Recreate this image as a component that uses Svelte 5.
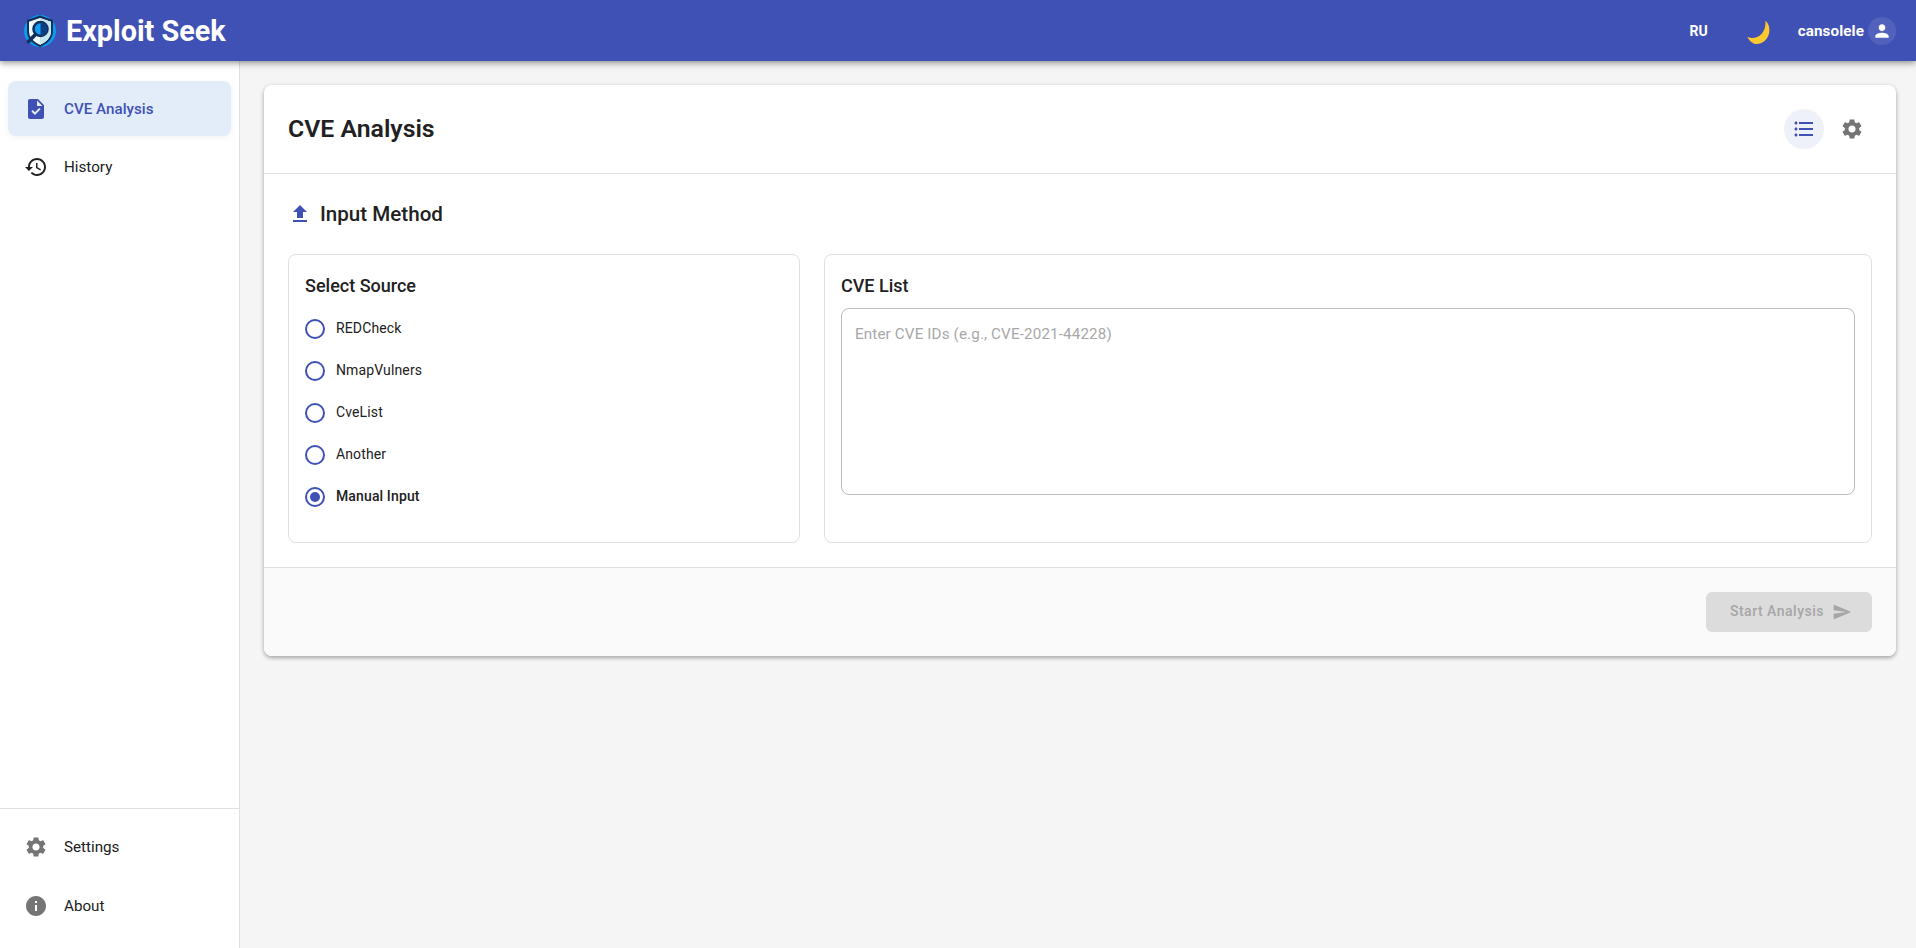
<script>
    const icons = {
        task: "M14 2H6c-1.1 0-1.99.9-1.99 2L4 20c0 1.1.89 2 1.99 2H18c1.1 0 2-.9 2-2V8l-6-6zm-3.06 16L7.4 14.46l1.41-1.41 2.12 2.12 4.24-4.24 1.41 1.41L10.94 18zM13 9V3.5L18.5 9H13z",
        history: "M13 3c-4.97 0-9 4.03-9 9H1l3.89 3.89.07.14L9 12H6c0-3.87 3.13-7 7-7s7 3.13 7 7-3.13 7-7 7c-1.93 0-3.68-.79-4.94-2.06l-1.42 1.42C8.27 19.99 10.51 21 13 21c4.97 0 9-4.03 9-9s-4.03-9-9-9zm-1 5v5l4.28 2.54.72-1.21-3.5-2.08V8H12z",
        settings: "M19.14 12.94c.04-.3.06-.61.06-.94 0-.32-.02-.64-.07-.94l2.03-1.58c.18-.14.23-.41.12-.61l-1.92-3.32c-.12-.22-.37-.29-.59-.22l-2.39.96c-.5-.38-1.03-.7-1.62-.94l-.36-2.54c-.04-.24-.24-.41-.48-.41h-3.84c-.24 0-.43.17-.47.41l-.36 2.54c-.59.24-1.13.57-1.62.94l-2.39-.96c-.22-.08-.47 0-.59.22L2.74 8.87c-.12.21-.08.47.12.61l2.03 1.58c-.05.3-.09.63-.09.94s.02.64.07.94l-2.03 1.58c-.18.14-.23.41-.12.61l1.92 3.32c.12.22.37.29.59.22l2.39-.96c.5.38 1.03.7 1.62.94l.36 2.54c.05.24.24.41.48.41h3.84c.24 0 .44-.17.47-.41l.36-2.54c.59-.24 1.13-.56 1.62-.94l2.39.96c.22.08.47 0 .59-.22l1.92-3.32c.12-.22.07-.47-.12-.61l-2.01-1.58zM12 15.6c-1.98 0-3.6-1.62-3.6-3.6s1.62-3.6 3.6-3.6 3.6 1.62 3.6 3.6-1.62 3.6-3.6 3.6z",
        info: "M12 2C6.48 2 2 6.48 2 12s4.48 10 10 10 10-4.48 10-10S17.52 2 12 2zm1 15h-2v-6h2v6zm0-8h-2V7h2v2z",
        upload: "M9 16h6v-6h4l-7-7-7 7h4zm-4 2h14v2H5z",
        send: "M2.01 21 23 12 2.01 3 2 10l15 2-15 2z",
        person: "M12 12c2.21 0 4-1.79 4-4s-1.79-4-4-4-4 1.79-4 4 1.79 4 4 4zm0 2c-2.67 0-8 1.34-8 4v2h16v-2c0-2.66-5.33-4-8-4z",
        list: "M4 10.5c-.83 0-1.5.67-1.5 1.5s.67 1.5 1.5 1.5 1.5-.67 1.5-1.5-.67-1.5-1.5-1.5zm0-6c-.83 0-1.5.67-1.5 1.5S3.17 7.5 4 7.5 5.5 6.83 5.5 6 4.83 4.5 4 4.5zm0 12c-.83 0-1.5.68-1.5 1.5s.68 1.5 1.5 1.5 1.5-.68 1.5-1.5-.67-1.5-1.5-1.5zM7 19h14v-2H7v2zm0-6h14v-2H7v2zm0-8v2h14V5H7z",
    };

    const topNav = [
        { label: "CVE Analysis", icon: "task", active: true },
        { label: "History", icon: "history", dark: true },
    ];
    const bottomNav = [
        { label: "Settings", icon: "settings" },
        { label: "About", icon: "info" },
    ];
    const sources = ["REDCheck", "NmapVulners", "CveList", "Another", "Manual Input"];
    let source = "Manual Input";
    let cves = "";
</script>

{#snippet icon(name, cls)}
    <svg class="icon {cls}" viewBox="0 0 24 24"><path d={icons[name]} /></svg>
{/snippet}

{#snippet navItem(item)}
    <div class="nav-item" class:active={item.active}>
        {@render icon(item.icon, item.active ? "primary" : item.dark ? "dark" : "grey")}
        <span>{item.label}</span>
    </div>
{/snippet}

<div class="page">
    <header class="appbar">
        <svg class="logo" viewBox="0 0 32 32">
            <circle cx="16" cy="16" r="16" fill="#0a9cf0" />
            <path d="M16 0.500 29 5v11c0 8-6 13-13 16C9 29 3 24 3 16V5z" fill="#12305a" />
            <path d="M16 3 27 6.800V16c0 6.800-5 11-11 13.800C10 27 5 22.800 5 16V6.800z" fill="#f2fafa" />
            <path d="M16 3v26.800c6-2.800 11-7 11-13.800V6.800z" fill="#c5e8ef" />
            <circle cx="16.500" cy="14" r="7" fill="#12a0f5" stroke="#12305a" stroke-width="2.600" />
            <path d="M16.500 7a7 7 0 0 1 0 14z" fill="#0a3f86" />
            <path d="M11.500 19.500 4.500 26.500" stroke="#12305a" stroke-width="3.800" stroke-linecap="round" />
        </svg>
        <div class="brand">Exploit Seek</div>
        <div class="spacer"></div>
        <span class="lang">RU</span>
        <svg class="moon" viewBox="0 0 24 24">
            <path d="M19.300.7C22.500 3 23.800 7.500 23.300 12 22.500 18.500 17 24 10.500 24 6.800 24 3.500 21 1.300 16.700 6 19 11.500 18 15 14.500 18.500 11 20 5.500 19.300.7z" fill="#fdc92f" />
        </svg>
        <span class="user">cansolele</span>
        <span class="avatar">{@render icon("person", "white")}</span>
    </header>

    <div class="body">
        <nav class="sidebar">
            <div class="nav-group">
                {#each topNav as item}
                    {@render navItem(item)}
                {/each}
            </div>
            <div class="nav-group bottom">
                {#each bottomNav as item}
                    {@render navItem(item)}
                {/each}
            </div>
        </nav>

        <main class="main">
            <section class="card">
                <div class="card-head">
                    <h1>CVE Analysis</h1>
                    <div class="head-actions">
                        <span class="round selected">{@render icon("list", "primary")}</span>
                        <span class="round">{@render icon("settings", "grey")}</span>
                    </div>
                </div>

                <div class="card-body">
                    <div class="section-title">
                        {@render icon("upload", "primary")}
                        <h2>Input Method</h2>
                    </div>
                    <div class="panels">
                        <div class="panel source">
                            <h3>Select Source</h3>
                            <div class="radios">
                                {#each sources as s}
                                    <label class="radio" class:checked={source === s}>
                                        <input type="radio" name="source" value={s} bind:group={source} />
                                        <span class="dot"></span>
                                        <span class="radio-label">{s}</span>
                                    </label>
                                {/each}
                            </div>
                        </div>
                        <div class="panel list">
                            <h3>CVE List</h3>
                            <textarea placeholder="Enter CVE IDs (e.g., CVE-2021-44228)" bind:value={cves}></textarea>
                        </div>
                    </div>
                </div>

                <div class="card-foot">
                    <button disabled>
                        Start Analysis
                        <svg class="icon send" viewBox="0 0 24 24"><path d={icons.send} /></svg>
                    </button>
                </div>
            </section>
        </main>
    </div>
</div>

<style>
    :global(body) {
        background: #f5f5f5;
        font-family: Roboto, "Liberation Sans", sans-serif;
        color: #212121;
    }

    .page {
        display: flex;
        flex-direction: column;
        height: 948px;
        overflow: hidden;
    }

    .icon {
        width: 24px;
        height: 24px;
        flex: none;
        fill: currentColor;
    }
    .icon.primary { color: #3f51b5; }
    .icon.grey { color: #757575; }
    .icon.dark { color: #212121; }
    .icon.white { color: #fff; }

    .appbar {
        position: relative;
        z-index: 2;
        flex: none;
        height: 61px;
        display: flex;
        align-items: center;
        padding: 0 20px 0 24px;
        box-sizing: border-box;
        background: #3f51b5;
        color: #fff;
        box-shadow: 0 2px 4px -1px rgba(0, 0, 0, 0.2), 0 4px 5px rgba(0, 0, 0, 0.14), 0 1px 10px rgba(0, 0, 0, 0.12);
    }
    .logo {
        width: 32px;
        height: 32px;
        margin-right: 10px;
    }
    .brand {
        font-size: 28.8px;
        font-weight: 700;
    }
    .spacer { flex: 1; }
    .lang {
        font-size: 14px;
        font-weight: 700;
        margin-right: 38px;
    }
    .moon {
        width: 24px;
        height: 24px;
        margin: 3px 28px 0 0;
    }
    .user {
        font-size: 15.2px;
        font-weight: 700;
        letter-spacing: 0.1px;
        margin-right: 4px;
    }
    .avatar {
        width: 28px;
        height: 28px;
        border-radius: 50%;
        background: rgba(255, 255, 255, 0.1);
        display: flex;
        align-items: center;
        justify-content: center;
    }
    .avatar .icon {
        width: 20px;
        height: 20px;
    }

    .body {
        flex: 1;
        display: flex;
        min-height: 0;
    }

    .sidebar {
        width: 240px;
        flex: none;
        box-sizing: border-box;
        background: #fff;
        border-right: 1px solid #e0e0e0;
        display: flex;
        flex-direction: column;
        justify-content: space-between;
    }
    .nav-group {
        padding: 20px 8px 0;
        display: flex;
        flex-direction: column;
        gap: 3px;
    }
    .nav-group.bottom {
        border-top: 1px solid #e0e0e0;
        gap: 4px;
        padding: 10px 8px 15px;
    }
    .nav-item {
        height: 55px;
        display: flex;
        align-items: center;
        gap: 16px;
        padding: 0 16px 0 16px;
        border-radius: 8px;
        font-size: 15.2px;
    }
    .nav-item.active {
        background: #e3edf9;
        color: #3f51b5;
        font-weight: 500;
        box-shadow: 0 2px 6px rgba(0, 0, 0, 0.05);
    }

    .main {
        flex: 1;
        min-width: 0;
        padding: 24px 20px 0 24px;
    }

    .card {
        background: #fff;
        border-radius: 8px;
        overflow: hidden;
        box-shadow: 0 2px 4px rgba(0, 0, 0, 0.3), 0 1px 5px rgba(0, 0, 0, 0.06);
    }
    .card-head {
        height: 89px;
        box-sizing: border-box;
        display: flex;
        align-items: center;
        justify-content: space-between;
        padding: 0 24px;
        border-bottom: 1px solid #e0e0e0;
    }
    h1 {
        margin: 0 0 2px;
        font-size: 24.8px;
        font-weight: 600;
    }
    .head-actions {
        display: flex;
        gap: 8px;
    }
    .round {
        width: 40px;
        height: 40px;
        border-radius: 50%;
        display: flex;
        align-items: center;
        justify-content: center;
    }
    .round.selected {
        background: #eef1f9;
    }

    .card-body {
        padding: 24px;
    }
    .section-title {
        display: flex;
        align-items: center;
        gap: 8px;
        height: 32px;
        margin-bottom: 24px;
    }
    h2 {
        margin: 0;
        font-size: 20.6px;
        font-weight: 500;
    }

    .panels {
        display: flex;
        gap: 24px;
    }
    .panel {
        box-sizing: border-box;
        height: 289px;
        border: 1px solid #e0e0e0;
        border-radius: 8px;
        padding: 16px;
    }
    .panel.source {
        width: 512px;
        flex: none;
    }
    .panel.list {
        flex: 1;
        min-width: 0;
    }
    h3 {
        margin: 1px 0 9px;
        font-size: 18px;
        font-weight: 500;
        line-height: 27px;
    }

    .radios {
        display: flex;
        flex-direction: column;
    }
    .radio {
        height: 42px;
        display: flex;
        align-items: center;
        gap: 11px;
        font-size: 14px;
        letter-spacing: 0.13px;
    }
    .radio-label {
        margin-bottom: 2px;
    }
    .radio input {
        display: none;
    }
    .radio.checked {
        font-weight: 500;
    }
    .dot {
        width: 20px;
        height: 20px;
        box-sizing: border-box;
        border: 2px solid #3f51b5;
        border-radius: 50%;
        display: flex;
        align-items: center;
        justify-content: center;
    }
    .radio.checked .dot::after {
        content: "";
        width: 10px;
        height: 10px;
        border-radius: 50%;
        background: #3f51b5;
    }

    textarea {
        display: block;
        width: 100%;
        height: 187px;
        box-sizing: border-box;
        padding: 16px 13px;
        border: 1px solid #bdbdbd;
        border-radius: 8px;
        outline: none;
        resize: none;
        font-family: inherit;
        font-size: 15.2px;
        letter-spacing: 0.14px;
        line-height: 19px;
    }
    textarea::placeholder {
        color: #a8a8a8;
        opacity: 1;
    }

    .card-foot {
        height: 89px;
        box-sizing: border-box;
        background: #fafafa;
        border-top: 1px solid #e0e0e0;
        display: flex;
        align-items: center;
        justify-content: flex-end;
        padding: 0 24px;
    }
    button {
        width: 166px;
        height: 40px;
        display: flex;
        align-items: center;
        justify-content: center;
        gap: 8px;
        padding: 0 0 2px 4px;
        border: 0;
        border-radius: 6px;
        background: #dcdcdc;
        color: #a6a6a6;
        font-family: inherit;
        font-size: 14px;
        font-weight: 500;
        letter-spacing: 0.5px;
    }
    .icon.send {
        width: 20px;
        height: 20px;
        margin-top: 2px;
    }
</style>
